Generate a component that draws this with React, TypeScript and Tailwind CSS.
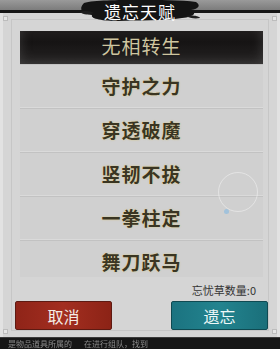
import React from 'react';

const talents = ['无相转生', '守护之力', '穿透破魔', '竖韧不拔', '一拳柱定', '舞刀跃马'];

const cjk = "font-['Noto_Sans_CJK_SC',sans-serif]";

export default function App() {
  const selected = 0;

  return (
    <div className={`relative w-[280px] h-[349px] overflow-hidden bg-[#1c1c1c] ${cjk}`}>
      {/* backdrop above the dialog */}
      <div className="h-[10px] bg-gradient-to-b from-[#9a9a9a] to-[#7c7c7c]" />
      <div className="h-[3px] bg-[#161616]" />

      {/* dialog panel */}
      <div className="relative h-[324px] flex flex-col bg-[#d5d5d5] border-l-[3px] border-r-[3px] border-[#e2e2e2]">
        <div className="absolute left-[8px] right-[8px] top-[6px] bottom-[6px] border border-[#c6c6c6] pointer-events-none" />
        <div className="absolute left-0 top-[3px] w-[5px] h-[5px] border border-[#bdbdbd] bg-[#e6e6e6]" />
        <div className="absolute right-0 top-[3px] w-[5px] h-[5px] border border-[#bdbdbd] bg-[#e6e6e6]" />
        <div className="absolute left-0 bottom-[3px] w-[5px] h-[5px] border border-[#bdbdbd] bg-[#e6e6e6]" />
        <div className="absolute right-0 bottom-[3px] w-[5px] h-[5px] border border-[#bdbdbd] bg-[#e6e6e6]" />

        {/* talent list, scrolled slightly */}
        <div className="relative mt-[18px] ml-[17px] mr-[14px] h-[246px] overflow-hidden bg-[#cdcdcd]">
          <div className="-mt-[11px] flex flex-col">
            {talents.map((t, i) =>
              i === selected ? (
                <div
                  key={t}
                  className="h-[44px] flex items-center justify-center bg-gradient-to-b from-[#2a2626] via-[#161414] to-[#262424] shadow-[inset_0_0_12px_rgba(120,120,120,0.35)]"
                >
                  <span className="pt-[8px] text-[19px] tracking-[1px] text-[#cfc6a0]">{t}</span>
                </div>
              ) : (
                <div
                  key={t}
                  className="h-[44px] flex items-center justify-center border-t border-t-[#c2c2c2] border-b border-b-[#dadada] bg-[#d0d0d0]"
                >
                  <span className="text-[19px] font-bold tracking-[1px] text-[#3a3522] [text-shadow:0_0_1px_#f3e7b8,0_0_2px_#cbbd86]">
                    {t}
                  </span>
                </div>
              )
            )}
          </div>
        </div>

        <div className="h-[23px] flex items-center justify-end pr-[21px] pt-[3px]">
          <span className="text-[11px] text-[#333333]">忘忧草数量:0</span>
        </div>

        <div className="flex justify-between pl-[12px] pr-[9px] pt-[1px]">
          <button className="w-[97px] h-[29px] flex items-center justify-center rounded-[2px] border border-[#5e1a12] bg-gradient-to-r from-[#8f2418] via-[#a32e20] to-[#8c2316] text-[16px] text-[#f4ece6]">
            取消
          </button>
          <button className="w-[97px] h-[29px] flex items-center justify-center rounded-[2px] border border-[#0f4a52] bg-gradient-to-r from-[#1b7380] via-[#23848f] to-[#1a6f7a] text-[16px] text-[#eef8f8]">
            遗忘
          </button>
        </div>
      </div>

      {/* game background below */}
      <div className="h-[12px] flex items-center gap-3 px-2 bg-[#161616] border-t border-[#3a3a3a] overflow-hidden">
        <span className="text-[8px] leading-[9px] text-[#8a8a8a] blur-[0.5px]">是物品道具所属的</span>
        <span className="text-[8px] leading-[9px] text-[#8a8a8a] blur-[0.5px]">在进行组队，找到</span>
      </div>

      {/* title ink splash */}
      <div className="absolute left-[78px] top-0 w-[124px] h-[22px]">
        <svg width="124" height="22" viewBox="0 0 124 22" className="absolute inset-0">
          <path
            d="M6 3 C16 0 40 0 60 0 C80 0 104 0 118 2 C123 5 121 9 113 10 C119 12 117 17 104 18 C86 21 60 20 40 21 C26 21 12 19 14 15 C4 14 0 9 6 3 Z"
            fill="#141414"
          />
          <path d="M2 12 C8 10 12 11 16 13 C10 15 5 15 2 12 Z" fill="#1e1e1e" />
          <path d="M108 16 C114 15 121 16 122 18 C117 19 111 18 108 16 Z" fill="#1e1e1e" />
        </svg>
        <div className="relative h-full flex items-center justify-center pt-[1px]">
          <span className="text-[17px] leading-[20px] text-white tracking-[1px]">遗忘天赋</span>
        </div>
      </div>

      {/* floating assist ball */}
      <div className="absolute left-[218px] top-[172px] w-[40px] h-[40px] rounded-full border-[1.5px] border-[#f0f0f0] opacity-60" />
      <div className="absolute left-[224px] top-[209px] w-[5px] h-[5px] rounded-full bg-[#9cc0dc] opacity-90" />
    </div>
  );
}
